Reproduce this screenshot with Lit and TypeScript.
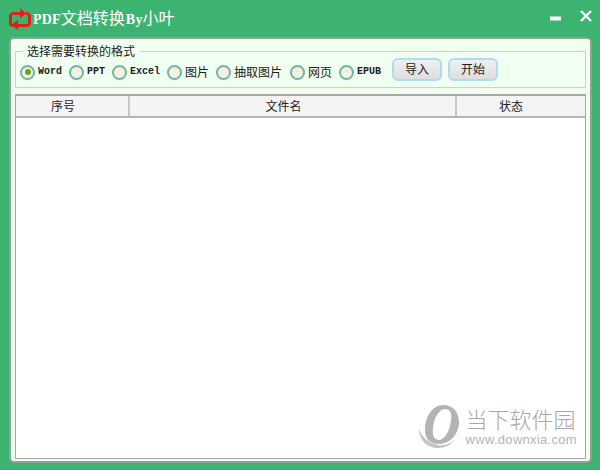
import { LitElement, html, css } from "lit";
import { customElement } from "lit/decorators.js";

const options: { label: string; latin: boolean; on?: boolean; gap?: number }[] = [
  { label: "Word", latin: true, on: true },
  { label: "PPT", latin: true },
  { label: "Excel", latin: true },
  { label: "图片", latin: false },
  { label: "抽取图片", latin: false, gap: 8 },
  { label: "网页", latin: false },
  { label: "EPUB", latin: true, gap: 11 },
];

@customElement("app-root")
export class AppRoot extends LitElement {
  static styles = css`
    :host {
      display: flex;
      flex-direction: column;
      width: 600px;
      height: 470px;
      background: #3cb371;
      overflow: hidden;
      font-family: "Noto Sans CJK SC", "Liberation Sans", sans-serif;
    }
    .titlebar {
      height: 37px;
      flex: none;
      display: flex;
      align-items: center;
      padding: 0 8px 0 7px;
      color: #fff;
      box-sizing: border-box;
    }
    .logo { flex: none; margin-right: 2px; }
    .title { font-size: 16px; line-height: 20px; white-space: nowrap; margin-top: -1px; }
    .title .lat { font-family: "Liberation Serif", serif; font-size: 14px; font-weight: 700; letter-spacing: 0.2px; }
    .title .by { margin-left: 1px; }
    .spacer { flex: 1; }
    .ctl { flex: none; display: block; }
    .ctl.min { margin-right: 19px; }
    .ctl.close { margin-bottom: 6px; }
    .panel {
      flex: 1;
      margin: 0 8px 7px 9px;
      background: #f0fff0;
      border: 2px solid #959e97;
      border-radius: 5px;
      padding: 12px 4px 2px 4px;
      display: flex;
      flex-direction: column;
      gap: 6px;
      min-height: 0;
      position: relative;
    }
    .fmt {
      position: relative;
      flex: none;
      height: 37px;
      box-sizing: border-box;
      border: 1px solid #c9d3ca;
      padding: 6px 0 0 4px;
      display: flex;
      align-items: flex-start;
    }
    .legend {
      position: absolute;
      left: 7px;
      top: -7px;
      font-size: 12px;
      line-height: 12px;
      color: #222;
      padding: 0 4px;
      background: #f0fff0;
    }
    .opt { display: flex; align-items: center; gap: 3px; margin-top: 6px; height: 16px; color: #222; }
    .radio {
      width: 11px;
      height: 11px;
      border: 2px solid #6ab7a9;
      border-radius: 50%;
      background: #f8efdf;
      display: flex;
      align-items: center;
      justify-content: center;
      flex: none;
    }
    .dot { width: 6px; height: 6px; border-radius: 50%; background: #6f9f1e; }
    .lbl { font-size: 12px; line-height: 16px; white-space: nowrap; }
    .lbl.lat { font-family: "Liberation Mono", monospace; font-size: 10px; font-weight: 700; }
    .btn {
      width: 50px;
      height: 23px;
      box-sizing: border-box;
      border: 2px solid #aadcf4;
      border-radius: 6px;
      background: linear-gradient(#f0f0f0, #dedede);
      font: inherit;
      font-size: 12px;
      color: #222;
      padding: 0 0 3px;
      flex: none;
    }
    .btn.first { margin-right: 6px; }
    .table {
      flex: 1;
      min-height: 0;
      background: #fff;
      border: 1px solid #a6a6a6;
      border-top: 2px solid #a6a6a6;
      display: flex;
      flex-direction: column;
    }
    .head {
      display: grid;
      grid-template-columns: 114px 327px 1fr;
      height: 20px;
      background: #f4f4f4;
      border-bottom: 2px solid #b5b5b5;
      flex: none;
    }
    .head div {
      font-size: 12px;
      line-height: 20px;
      text-align: center;
      color: #222;
      border-right: 2px solid #c8c8c8;
      box-sizing: border-box;
      padding-right: 18px;
    }
    .head div:last-child { border-right: 0; padding-right: 20px; }
    .mark {
      position: absolute;
      right: 13px;
      bottom: 13px;
      display: flex;
      align-items: center;
      gap: 6px;
      color: #b5b5b5;
    }
    .mark .txt { display: flex; flex-direction: column; }
    .mark .cn { font-size: 22px; line-height: 26px; font-weight: 300; color: #a8a8a8; white-space: nowrap; }
    .mark .en { font-family: "Liberation Sans", sans-serif; font-size: 13px; line-height: 16px; letter-spacing: 0.3px; white-space: nowrap; margin-top: 1px; }
  `;

  render() {
    return html`
      <div class="titlebar">
        <svg class="logo" width="24" height="24" viewBox="7 7 24 24" fill="#dc2318" stroke="none">
          <path d="M20 12H12L9 15V24.5L11.5 27H15.5V24H12V15.5L13 15H20Z" />
          <path d="M20 8L26 13.5 20 18.5Z" />
          <path d="M26 12H28L31 15V24.5L28 27H17V24H27.5L28 23.5V15.5L27 15H26Z" />
          <path d="M18 19.5L11.5 25 18 30Z" />
        </svg>
        <div class="title"><span class="lat">PDF</span>文档转换<span class="lat by">By</span>小叶</div>
        <div class="spacer"></div>
        <svg class="ctl min" width="11" height="5" viewBox="0 0 11 5"><rect width="11" height="4" y="0.5" fill="#fff" /></svg>
        <svg class="ctl close" width="12" height="12" viewBox="0 0 12 12" stroke="#fff" stroke-width="2.4"><path d="M1 1L11 11M11 1L1 11" /></svg>
      </div>
      <div class="panel">
        <div class="fmt">
          <div class="legend">选择需要转换的格式</div>
          ${options.map(
            (o) => html`<div class="opt" style="margin-right:${o.gap ?? 7}px">
              <span class="radio">${o.on ? html`<span class="dot"></span>` : ""}</span>
              <span class="lbl ${o.latin ? "lat" : ""}">${o.label}</span>
            </div>`
          )}
          <button class="btn first">导入</button>
          <button class="btn">开始</button>
        </div>
        <div class="table">
          <div class="head"><div>序号</div><div>文件名</div><div>状态</div></div>
        </div>
        <div class="mark">
          <svg width="42" height="44" viewBox="0 0 42 44">
            <path fill="#b4b4b4" fill-rule="evenodd" d="M25 1C35 1 41 8 41 18C41 31 31 40 21 40C10 40 7 33 7 26C7 12 15 1 25 1ZM27 5C21 5 16 14 15 24C14 31 16 36 21 36C27 36 32 26 33 16C34 9 32 5 27 5Z" />
            <path fill="#c4c4c4" d="M1 25C1 36 9 44 20 44C27 44 33 41 37 36C32 40 26 42 20 41C10 39 4 33 1 25Z" />
          </svg>
          <div class="txt">
            <div class="cn">当下软件园</div>
            <div class="en">www.downxia.com</div>
          </div>
        </div>
      </div>
    `;
  }
}
